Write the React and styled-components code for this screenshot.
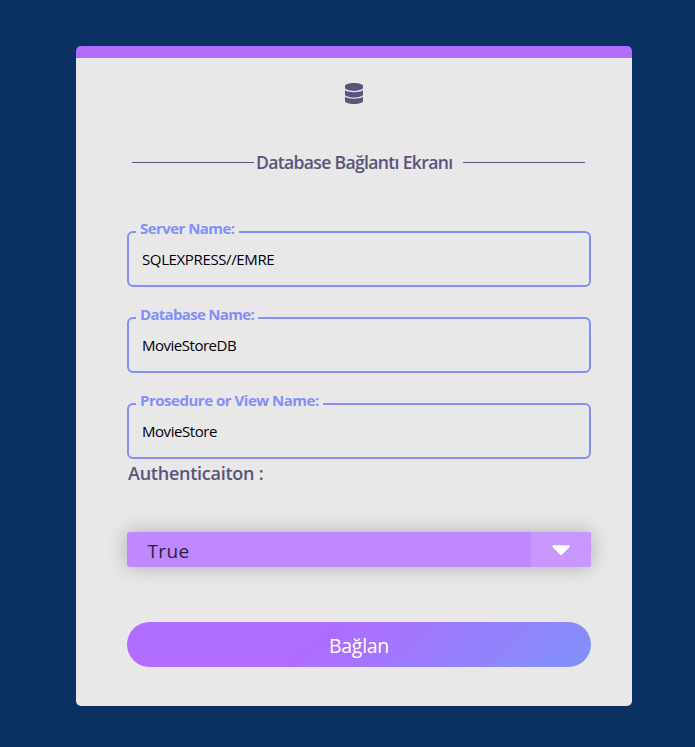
import React from 'react';
import styled, { createGlobalStyle } from 'styled-components';
import { FaDatabase, FaCaretDown } from 'react-icons/fa';

const GlobalStyle = createGlobalStyle`
  *, *::before, *::after { box-sizing: border-box; }
  body {
    margin: 0;
    background: #0a3161;
    color: #57557a;
    font-family: 'Segoe UI', 'Open Sans', 'Noto Sans', sans-serif;
  }
`;

const Page = styled.main`
  min-height: 747px;
  padding: 46px 63px 41px 76px;
`;

const Card = styled.form`
  display: flex;
  flex-direction: column;
  width: 556px;
  height: 660px;
  padding: 0 41px 0 51px;
  background: #e9e7e8;
  border-top: 12px solid #b06bff;
  border-radius: 5px;
`;

const Logo = styled.div`
  display: flex;
  justify-content: center;
  height: 21px;
  margin: 25px 0 46px;
  padding-right: 10px;
  svg { width: 18px; height: 21px; }
`;

const Heading = styled.div`
  display: flex;
  align-items: center;
  height: 25px;
  margin: 0 6px 56px 5px;
`;

const Rule = styled.span`
  width: 122px;
  height: 1px;
  background: #57557a;
`;

const Title = styled.h1`
  flex: 1;
  margin: 0;
  padding: 0 0 1px 2px;
  font-size: 17.6px;
  line-height: 24px;
  font-weight: 600;
  letter-spacing: -0.68px;
  white-space: nowrap;
`;

const Field = styled.div`
  position: relative;
  height: 56px;
  margin-top: ${({ $first }) => ($first ? 0 : 30)}px;
`;

const FieldInput = styled.input`
  display: block;
  width: 100%;
  height: 56px;
  padding: 0 13px;
  border: 2px solid #838efb;
  border-radius: 6px;
  outline: 0;
  background: #e8e8e8;
  color: #000008;
  font: 400 15px 'Segoe UI', 'Open Sans', 'Noto Sans', sans-serif;
  letter-spacing: ${({ $spacing }) => $spacing}px;
`;

const FieldLabel = styled.label`
  position: absolute;
  top: -13px;
  left: 9px;
  padding: 0 4px;
  background: linear-gradient(#e9e7e8 60%, #e8e8e8 60%);
  color: #838efb;
  font-size: 15px;
  line-height: 20px;
  font-weight: 700;
  letter-spacing: ${({ $spacing }) => $spacing}px;
  white-space: nowrap;
`;

const SectionLabel = styled.div`
  height: 28px;
  margin-bottom: 45px;
  padding-left: 1px;
  font-size: 18px;
  line-height: 29px;
  font-weight: 600;
  letter-spacing: -0.25px;
`;

const Select = styled.div`
  display: flex;
  flex: none;
  height: 35px;
  overflow: hidden;
  border-radius: 3px;
  background: #bf88ff;
  box-shadow: 0 0 20px rgba(0, 0, 0, 0.25);
`;

const SelectValue = styled.span`
  flex: 1;
  padding-left: 20.5px;
  color: #27213f;
  font-size: 19px;
  font-weight: 400;
  line-height: 39px;
  letter-spacing: 0.4px;
`;

const SelectArrow = styled.span`
  display: flex;
  align-items: center;
  justify-content: center;
  width: 60px;
  padding-bottom: 2px;
  background: #c797ff;
  color: #fff;
  svg { width: 30px; height: 30px; }
`;

const Submit = styled.button`
  flex: none;
  height: 45px;
  margin-top: 55px;
  padding: 2px 0 0;
  border: 0;
  border-radius: 23px;
  background: linear-gradient(140deg, #b06bff 40%, #838efb 95%);
  color: #fff;
  font: 400 19.5px 'Segoe UI', 'Open Sans', 'Noto Sans', sans-serif;
  letter-spacing: -0.3px;
`;

const fields = [
  { id: 'server', label: 'Server Name:', value: 'SQLEXPRESS//EMRE', ls: -0.55, vs: -0.37 },
  { id: 'database', label: 'Database Name:', value: 'MovieStoreDB', ls: -0.69, vs: -0.48 },
  { id: 'view', label: 'Prosedure or View Name:', value: 'MovieStore', ls: -0.48, vs: -0.45 },
];

export default function App() {
  return (
    <>
      <GlobalStyle />
      <Page>
        <Card>
          <Logo><FaDatabase preserveAspectRatio="none" /></Logo>
          <Heading>
            <Rule />
            <Title>Database Bağlantı Ekranı</Title>
            <Rule />
          </Heading>
          {fields.map((field, index) => (
            <Field key={field.id} $first={index === 0}>
              <FieldInput id={field.id} defaultValue={field.value} $spacing={field.vs} />
              <FieldLabel htmlFor={field.id} $spacing={field.ls}>{field.label}</FieldLabel>
            </Field>
          ))}
          <SectionLabel>Authenticaiton :</SectionLabel>
          <Select>
            <SelectValue>True</SelectValue>
            <SelectArrow><FaCaretDown /></SelectArrow>
          </Select>
          <Submit type="button">Bağlan</Submit>
        </Card>
      </Page>
    </>
  );
}
